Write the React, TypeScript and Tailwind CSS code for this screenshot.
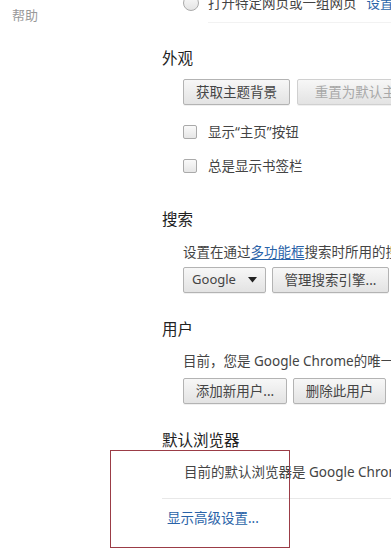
import { ReactNode } from 'react';

const font = { fontFamily: '"Noto Sans", "Noto Sans CJK SC", sans-serif' };

function Btn({
  children,
  w,
  disabled,
}: {
  children: ReactNode;
  w: string;
  disabled?: boolean;
}) {
  return (
    <div
      className={`${w} h-[26px] shrink-0 flex items-center justify-center rounded-[2px] border bg-gradient-to-b from-[#f7f7f7] to-[#e3e3e3] text-[13.5px] shadow-[0_1px_0_rgba(0,0,0,0.06)] ${
        disabled ? 'border-[#d0d0d0] text-[#a8a8a8]' : 'border-[#b3b3b3] text-[#444]'
      }`}
    >
      {children}
    </div>
  );
}

function Check({ label }: { label: string }) {
  return (
    <div className="h-5 flex items-center pl-[21px] gap-[11px]">
      <div className="w-[14px] h-[14px] shrink-0 rounded-[2px] border border-[#aaa] bg-gradient-to-b from-[#fafafa] to-[#e6e6e6]" />
      <span className="text-[13.5px] text-[#444]">{label}</span>
    </div>
  );
}

function Heading({ children, mt }: { children: ReactNode; mt: string }) {
  return <div className={`${mt} h-5 flex items-center text-[15.5px] text-[#222]`}>{children}</div>;
}

export default function App() {
  return (
    <div className="w-[391px] h-[556px] bg-white overflow-hidden relative flex" style={font}>
      <div className="w-[162px] shrink-0 pl-3 pt-[6px]">
        <div className="text-[13px] text-[#999] h-5 flex items-center">帮助</div>
      </div>

      <div className="flex-1 min-w-0 whitespace-nowrap overflow-hidden">
        {/* row cut off at the top */}
        <div className="-mt-[7px] h-5 flex items-center pl-[21px] gap-[9px]">
          <div className="w-4 h-4 shrink-0 rounded-full border border-[#aaa] bg-gradient-to-b from-[#fafafa] to-[#e4e4e4]" />
          <span className="text-[13.5px] text-[#444]">
            打开特定网页或一组网页
            <span className="ml-[10px] text-[#2a63a8]">设置网页</span>
          </span>
        </div>
        <div className="mt-[9px] ml-[46px] border-t border-[#f2f2f2]" />

        <Heading mt="mt-[26px]">外观</Heading>
        <div className="mt-[10px] pl-[21px] flex gap-[7px]">
          <Btn w="w-[107px]">获取主题背景</Btn>
          <Btn w="w-[130px]" disabled>
            重置为默认主题
          </Btn>
        </div>
        <div className="mt-[17px]">
          <Check label="显示“主页”按钮" />
        </div>
        <div className="mt-[14px]">
          <Check label="总是显示书签栏" />
        </div>

        <Heading mt="mt-[34px]">搜索</Heading>
        <div className="mt-[12px] h-5 flex items-center pl-[21px] text-[13.5px] text-[#444]">
          设置在通过
          <span className="text-[#2a63a8] underline underline-offset-2">多功能框</span>
          搜索时所用的搜索引擎。
        </div>
        <div className="mt-[5px] pl-[21px] flex gap-[6px]">
          <Btn w="w-[83px]">
            <span className="text-[13px]">Google</span>
            <svg className="ml-[12px]" width="9" height="6" viewBox="0 0 9 6">
              <path d="M0 0h9L4.5 5.5z" fill="#222" />
            </svg>
          </Btn>
          <Btn w="w-[117px]">管理搜索引擎...</Btn>
        </div>

        <Heading mt="mt-[27px]">用户</Heading>
        <div className="mt-[11px] h-5 flex items-center pl-[21px] text-[13.5px] text-[#444]">
          目前，您是 Google Chrome的唯一用户。
        </div>
        <div className="mt-[7px] pl-[21px] flex gap-[6px]">
          <Btn w="w-[104px]">添加新用户...</Btn>
          <Btn w="w-[93px]">删除此用户</Btn>
          <Btn w="w-[130px]">导入书签和设置...</Btn>
        </div>

        <Heading mt="mt-[27px]">默认浏览器</Heading>
        <div className="mt-[11px] h-5 flex items-center pl-[22px] text-[13.5px] text-[#444]">
          目前的默认浏览器是 Google Chrome。
        </div>
        <div className="mt-[16px] border-t border-[#e8e8e8]" />
        <div className="mt-[9px] h-5 flex items-center pl-[5px] text-[13.5px] text-[#2a63a8]">
          显示高级设置...
        </div>
      </div>

      {/* annotation box */}
      <div className="absolute left-[110px] top-[450px] w-[180px] h-[98px] border-[1.5px] border-[#9b3c46]" />
    </div>
  );
}
